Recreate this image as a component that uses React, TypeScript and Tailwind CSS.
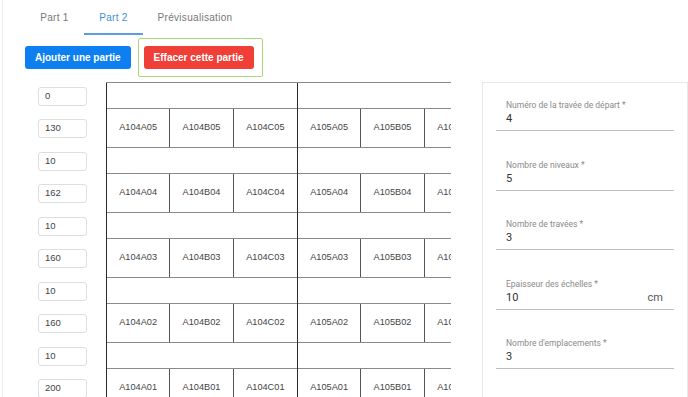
import React from "react";

const levels = [
  { gap: "0", height: "130", level: 5 },
  { gap: "10", height: "162", level: 4 },
  { gap: "10", height: "160", level: 3 },
  { gap: "10", height: "160", level: 2 },
  { gap: "10", height: "200", level: 1 },
];

const bays = ["A104", "A105", "A106"];
const cols = ["A", "B", "C"];

const fields = [
  { label: "Numéro de la travée de départ *", value: "4" },
  { label: "Nombre de niveaux *", value: "5" },
  { label: "Nombre de travées *", value: "3" },
  { label: "Epaisseur des échelles *", value: "10", unit: "cm" },
  { label: "Nombre d'emplacements *", value: "3" },
];

function SmallInput({ value }: { value: string }) {
  return (
    <div className="flex h-[19px] w-[49px] items-center rounded-[3px] border border-[#dedede] bg-white pl-[6px] text-[9.5px] text-[#444]">
      {value}
    </div>
  );
}

function Bay({ code }: { code: string }) {
  return (
    <div className="w-[191px] shrink-0 border-l border-[#2a2a2a]">
      {levels.map((l) => (
        <div key={l.level}>
          <div className="h-[26px] border-b border-[#8a8a8a]" />
          <div className="grid h-[39px] grid-cols-3 border-b border-[#8a8a8a]">
            {cols.map((c, i) => (
              <div
                key={c}
                className={
                  "flex items-center justify-center overflow-hidden whitespace-nowrap text-[9.2px] text-[#444] " +
                  (i < 2 ? "border-r border-[#555]" : "")
                }
              >
                {code}
                {c}0{l.level}
              </div>
            ))}
          </div>
        </div>
      ))}
    </div>
  );
}

export default function App() {
  return (
    <div className="min-h-screen bg-white font-['Liberation_Sans',Arial,sans-serif]">
      <div className="ml-[2px] min-h-screen border-l border-[#ececec] pl-[22px]">
        {/* tabs */}
        <div className="flex h-[35px] text-[10px] tracking-[0.3px] text-[#777]">
          <div className="flex w-[59px] items-center justify-center">Part 1</div>
          <div className="flex w-[59px] items-center justify-center border-b-2 border-[#5a9de0] pt-[2px] text-[#3d8fd8]">
            Part 2
          </div>
          <div className="flex w-[104px] items-center justify-center">Prévisualisation</div>
        </div>

        {/* actions */}
        <div className="mt-[3px] flex items-center gap-[7px]">
          <button className="h-[23px] rounded-[3px] bg-[#0d7ff0] px-[10px] text-[10px] font-bold text-white">
            Ajouter une partie
          </button>
          <div className="flex h-[39px] w-[125px] items-center rounded-[2px] border border-[#a9d872] pl-[5px]">
            <button className="h-[23px] rounded-[3px] bg-[#ef3f37] px-[10px] text-[10px] font-bold text-white">
              Effacer cette partie
            </button>
          </div>
        </div>

        {/* body */}
        <div className="mt-[5px] flex">
          <div className="w-[81px] shrink-0 pl-[13px] pt-px">
            {levels.map((l) => (
              <div key={l.level}>
                <div className="flex h-[26px] items-center">
                  <SmallInput value={l.gap} />
                </div>
                <div className="flex h-[39px] items-center">
                  <SmallInput value={l.height} />
                </div>
              </div>
            ))}
          </div>

          <div className="w-[345px] shrink-0 overflow-hidden">
            <div className="flex w-max border-t border-[#8a8a8a]">
              {bays.map((b) => (
                <Bay key={b} code={b} />
              ))}
            </div>
          </div>

          <div className="ml-[31px] flex flex-1 flex-col gap-[28.5px] self-start border border-[#e8e8e8] px-[13px] pb-[48px] pt-[17px] font-['Roboto',Arial,sans-serif]">
            {fields.map((f) => (
              <div key={f.label}>
                <div className="h-[10px] pl-[10px] text-[8.5px] leading-[10px] text-[#8a8a8a]">
                  {f.label}
                </div>
                <div className="flex h-[21px] items-start justify-between border-b border-[#bdbdbd] pl-[10px] pr-[11px] pt-[2px] text-[11px] leading-[13px] text-[#333]">
                  <span>{f.value}</span>
                  {f.unit && <span className="text-[#555]">{f.unit}</span>}
                </div>
              </div>
            ))}
          </div>
        </div>
      </div>
    </div>
  );
}
